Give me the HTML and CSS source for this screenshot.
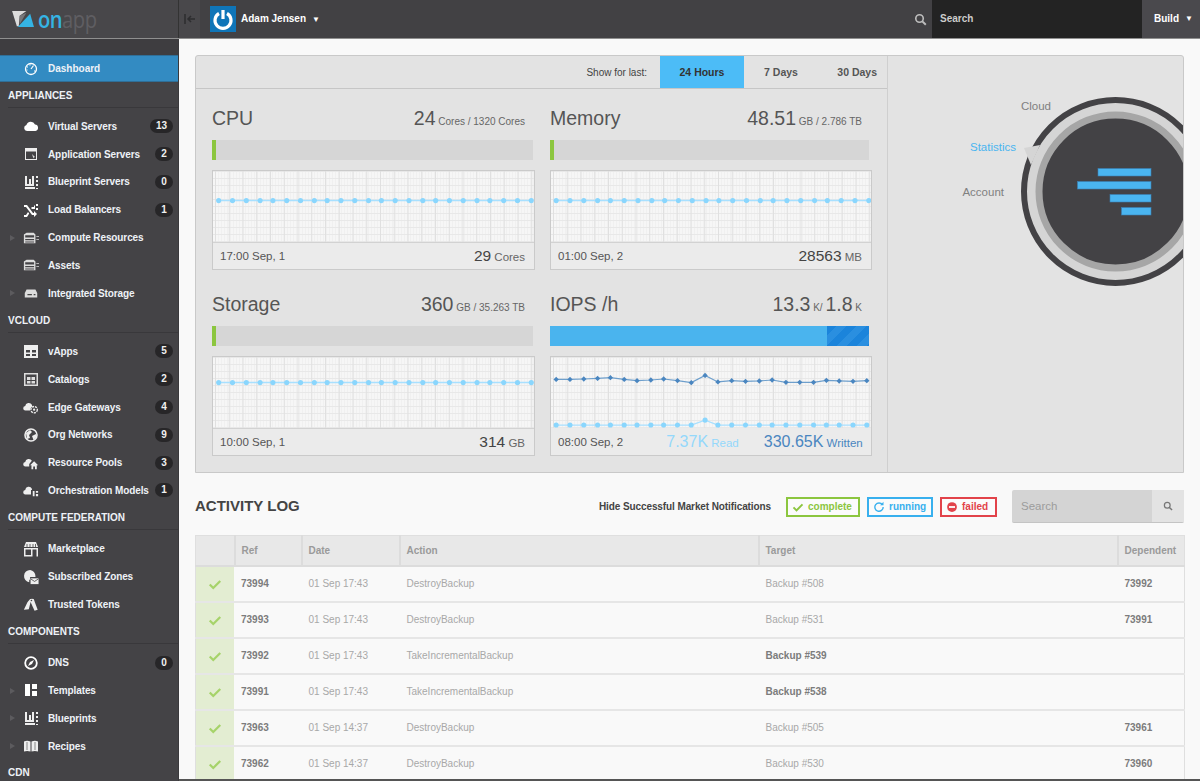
FILE: index.html
```html
<!DOCTYPE html>
<html lang="en">
<head>
<meta charset="utf-8">
<title>OnApp Dashboard</title>
<link rel="stylesheet" href="styles.css">
</head>
<body>
<svg class="defs" aria-hidden="true">
  <defs>
    <marker id="dl" viewBox="0 0 6 6" refX="3" refY="3" markerWidth="6" markerHeight="6" markerUnits="userSpaceOnUse"><circle cx="3" cy="3" r="2.6" fill="#8ad6fd"/></marker>
    <marker id="dd" viewBox="0 0 6 6" refX="3" refY="3" markerWidth="6" markerHeight="6" markerUnits="userSpaceOnUse"><path d="M3 .3 5.7 3 3 5.7 .3 3Z" fill="#4a86c0"/></marker>
    <symbol id="flat" viewBox="0 0 320 72">
      <polyline fill="none" stroke="#a8e0ff" stroke-width="1.5" marker-start="url(#dl)" marker-mid="url(#dl)" marker-end="url(#dl)" points="3,30 17,30 31,30 45,30 58,30 72,30 86,30 100,30 113,30 127,30 141,30 155,30 168,30 182,30 196,30 210,30 223,30 237,30 251,30 265,30 278,30 292,30 306,30 320,30"/>
    </symbol>
    <symbol id="i-cloud" viewBox="0 0 16 16"><path d="M4 13a3 3 0 0 1-.6-5.9A4.6 4.6 0 0 1 12 6.500a3.300 3.300 0 0 1 .5 6.500Z" fill="#fff"/></symbol>
    <symbol id="i-window" viewBox="0 0 16 16"><path d="M2 2h12v12H2z M3 5.500v7.500h10V5.500z" fill="#eee" fill-rule="evenodd"/><path d="M9 8l3 3-1.200.4-.4 1.200z" fill="#ddd"/></symbol>
    <symbol id="i-blue" viewBox="0 0 16 16"><path d="M2 2h2v8h2V5h2v5h1V2h2v10H2zM2 13h10v2H2zM13 2h2v2h-2zM13 6h2v2h-2zM13 10h2v2h-2zM13 14h2v1h-2z" fill="#eee"/></symbol>
    <symbol id="i-shuf" viewBox="0 0 16 16"><path d="M1 3h3l6 8h1V9l3 3-3 3v-2H9L3 5H1zM1 13h2l2-3 1.200 1.500L4 15H1zM8 6l1-1h2V3l0 0 1 1v3H9z" fill="#fff"/><path d="M13 2h2v2h-2zM13 6h2v2h-2z" fill="#fff"/></symbol>
    <symbol id="i-rack" viewBox="0 0 18 16"><path d="M4 2h8l2 2v10H1V4zM2.500 5v2.500h10V5zM2.500 9v1.500h10V9zM2.500 12v1h10v-1z" fill="#ddd" fill-rule="evenodd"/><path d="M15 6h3v1h-3zM15 9h3v1h-3z" fill="#ddd"/></symbol>
    <symbol id="i-disk" viewBox="0 0 18 16"><path d="M4 4h10l2 4v5H2V8z" fill="#ddd"/><path d="M5 9h5v1.500H5zM12 9h2v1.500h-2z" fill="#444"/></symbol>
    <symbol id="i-grid" viewBox="0 0 16 16"><path d="M1 2h14v13H1zM3 7v2.500h4V7zM9 7v2.500h4V7zM3 11v2h4v-2zM9 11v2h4v-2z" fill="#eee" fill-rule="evenodd"/></symbol>
    <symbol id="i-cat" viewBox="0 0 16 16"><path d="M1 2h14v13H1zM2.500 3.500v10h11v-10zM4 6h3.500v3H4zM8.500 6H12v3H8.500zM4 10h3.500v2.500H4zM8.500 10H12v2.500H8.500z" fill="#ddd" fill-rule="evenodd"/></symbol>
    <symbol id="i-globe" viewBox="0 0 16 16"><circle cx="8" cy="8" r="6" fill="none" stroke="#eee" stroke-width="1.600"/><path d="M3 6l4-3 2 2-3 3 1 3-3 1zM9 9l4-2 .5 3-3 3z" fill="#eee"/></symbol>
    <symbol id="i-edge" viewBox="0 0 18 16"><path d="M3 12a2.500 2.500 0 0 1-.5-5A4 4 0 0 1 10 5.500 3 3 0 0 1 10 8a4 4 0 0 0-2 4Z" fill="#eee"/><circle cx="12.500" cy="11" r="3.600" fill="none" stroke="#eee" stroke-width="1.500" stroke-dasharray="2.500 1"/><circle cx="12.500" cy="11" r="1.300" fill="#eee"/></symbol>
    <symbol id="i-pool" viewBox="0 0 18 16"><path d="M3 12a2.500 2.500 0 0 1-.5-5A4 4 0 0 1 10 5.500L7 9v3Z" fill="#eee"/><path d="M12.500 6 17 10.500h-1.500V15h-2v-3h-2v3h-2v-4.500H8z" fill="#eee"/></symbol>
    <symbol id="i-orch" viewBox="0 0 18 16"><path d="M3 13a2.500 2.500 0 0 1-.5-5A4 4 0 0 1 10 6.500 3 3 0 0 1 10 8H9v5Z" fill="#eee"/><path d="M11 9h2v6h-2zM14.500 9h2.500v2h-2.500zM14.500 12.500h2.500V15h-2.500z" fill="#eee"/></symbol>
    <symbol id="i-shop" viewBox="0 0 16 16"><path d="M3 1h10l2 5H1z" fill="#eee"/><path d="M1 7h14v8.500H1zM2.500 8.500v5.500h5.500v-5.500zM9.500 8.500v7H13.500v-7z" fill="#eee" fill-rule="evenodd"/><path d="M4 3v3M7 3v3M10 3v3M12.500 3v3" stroke="#444" stroke-width=".8"/></symbol>
    <symbol id="i-sub" viewBox="0 0 18 18"><path d="M8 1a7 7 0 0 0-1 13.900V12h1V9h6V8a7 7 0 0 0-6-7Z" fill="#eee"/><path d="M8.500 10.500h9v6.500h-9z" fill="#eee"/><path d="M8.500 11l4.500 3 4.500-3" fill="none" stroke="#444" stroke-width=".9"/></symbol>
    <symbol id="i-keys" viewBox="0 0 18 16"><path d="M1 14.500 5 6l3-3.500h2.500L8.500 6 6.500 14z" fill="#eee"/><path d="M9.500 2 12 2.500l4.500 12-3.500 1-5-11z" fill="#eee"/><circle cx="9.500" cy="4" r=".9" fill="#444"/></symbol>
    <symbol id="i-comp" viewBox="0 0 16 16"><circle cx="8" cy="8" r="5.800" fill="none" stroke="#fff" stroke-width="1.800"/><path d="M11 5 9 9 5 11l2-4z" fill="#fff"/></symbol>
    <symbol id="i-tmpl" viewBox="0 0 16 16"><path d="M2 2h5v12H2zM9 2h5v5H9zM9 9h5v5H9z" fill="#fff"/></symbol>
    <symbol id="i-book" viewBox="0 0 16 16"><path d="M1 3.500Q4 2 7.500 3.500v10Q4 12.500 1 13.500zM8.500 3.500Q12 2 15 3.500v10Q12 12.500 8.500 13.500z" fill="#eee"/><path d="M4 4v8M12 4v8" stroke="#444" stroke-width=".6"/></symbol>
    <symbol id="i-dash" viewBox="0 0 16 16"><circle cx="8" cy="8" r="5.500" fill="none" stroke="#fff" stroke-width="1.300"/><path d="M8 8 10.500 4.500M4 6h1M3.500 9h1M11 10h1.500M7 3.500v1" stroke="#fff" stroke-width="1.200"/></symbol>
    <symbol id="i-check" viewBox="0 0 16 16"><path d="M2 8.500 6 12.500 14 4.500" fill="none" stroke="currentColor" stroke-width="2.600"/></symbol>
    <symbol id="i-search" viewBox="0 0 16 16"><circle cx="6.800" cy="6.800" r="4.600" fill="none" stroke="currentColor" stroke-width="2"/><path d="M10.300 10.300 14.500 14.500" stroke="currentColor" stroke-width="2.400"/></symbol>
  </defs>
</svg>

<header class="topbar">
  <div class="logo">
    <svg class="logo-mark" viewBox="0 0 24 20"><path d="M0 1h15L8 6 7 17H5z" fill="#dcdcdc"/><path d="M8 6 15 3 8 15z" fill="#77777a"/><path d="M6 18 19 4l4 14z" fill="#35b4e4"/></svg>
    <span class="logo-text"><span class="logo-on">on</span><span class="logo-app">app</span></span>
  </div>
  <div class="collapse">
    <svg class="collapse-icon" viewBox="0 0 12 10"><path d="M1 0v10M11 5H4M7 2 4 5l3 3" fill="none" stroke="#2d2d2f" stroke-width="1.500"/></svg>
  </div>
  <div class="user">
    <div class="avatar"><svg class="avatar-icon" viewBox="0 0 26 26"><path d="M9 7.500a8 8 0 1 0 8 0" fill="none" stroke="#fff" stroke-width="3.200"/><path d="M13 4v9" stroke="#fff" stroke-width="3.200"/></svg></div>
    <span class="user-name">Adam Jensen</span><span class="caret">▼</span>
  </div>
  <div class="search-icon"><svg class="icon14" viewBox="0 0 16 16"><use href="#i-search"/></svg></div>
  <div class="top-search">Search</div>
  <div class="build">Build<span class="caret">▼</span></div>
</header>

<div class="layout">
  <nav class="sidebar">
    <a class="active-row"><svg class="ni"><use href="#i-dash"/></svg><span>Dashboard</span></a>

    <h3 class="nav-head">APPLIANCES</h3>
    <a class="row"><svg class="ni"><use href="#i-cloud"/></svg><span>Virtual Servers</span><b class="count">13</b></a>
    <a class="row"><svg class="ni"><use href="#i-window"/></svg><span>Application Servers</span><b class="count">2</b></a>
    <a class="row"><svg class="ni"><use href="#i-blue"/></svg><span>Blueprint Servers</span><b class="count">0</b></a>
    <a class="row"><svg class="ni"><use href="#i-shuf"/></svg><span>Load Balancers</span><b class="count">1</b></a>
    <a class="row tree"><svg class="ni"><use href="#i-rack"/></svg><span>Compute Resources</span></a>
    <a class="row"><svg class="ni"><use href="#i-rack"/></svg><span>Assets</span></a>
    <a class="row tree"><svg class="ni"><use href="#i-disk"/></svg><span>Integrated Storage</span></a>

    <h3 class="nav-head">VCLOUD</h3>
    <a class="row"><svg class="ni"><use href="#i-grid"/></svg><span>vApps</span><b class="count">5</b></a>
    <a class="row"><svg class="ni"><use href="#i-cat"/></svg><span>Catalogs</span><b class="count">2</b></a>
    <a class="row"><svg class="ni"><use href="#i-edge"/></svg><span>Edge Gateways</span><b class="count">4</b></a>
    <a class="row"><svg class="ni"><use href="#i-globe"/></svg><span>Org Networks</span><b class="count">9</b></a>
    <a class="row"><svg class="ni"><use href="#i-pool"/></svg><span>Resource Pools</span><b class="count">3</b></a>
    <a class="row"><svg class="ni"><use href="#i-orch"/></svg><span>Orchestration Models</span><b class="count">1</b></a>

    <h3 class="nav-head">COMPUTE FEDERATION</h3>
    <a class="row"><svg class="ni"><use href="#i-shop"/></svg><span>Marketplace</span></a>
    <a class="row"><svg class="ni"><use href="#i-sub"/></svg><span>Subscribed Zones</span></a>
    <a class="row"><svg class="ni"><use href="#i-keys"/></svg><span>Trusted Tokens</span></a>

    <h3 class="nav-head">COMPONENTS</h3>
    <a class="row"><svg class="ni"><use href="#i-comp"/></svg><span>DNS</span><b class="count">0</b></a>
    <a class="row tree"><svg class="ni"><use href="#i-tmpl"/></svg><span>Templates</span></a>
    <a class="row tree"><svg class="ni"><use href="#i-blue"/></svg><span>Blueprints</span></a>
    <a class="row tree"><svg class="ni"><use href="#i-book"/></svg><span>Recipes</span></a>

    <h3 class="nav-head">CDN</h3>
  </nav>

  <main class="main">
    <div class="content">
      <section class="panel">
        <div class="stats">
          <div class="periods">
            <span class="show-for">Show for last:</span>
            <a class="period period-on">24 Hours</a>
            <a class="period">7 Days</a>
            <a class="period period-last">30 Days</a>
          </div>
          <div class="stat-grid">
            <article class="stat">
              <div class="stat-head"><h2>CPU</h2><p><em>24</em> Cores / 1320 Cores</p></div>
              <div class="bar"><i class="bar-used"></i></div>
              <div class="chart">
                <div class="plot"><svg class="plot-svg"><use href="#flat"/></svg></div>
                <div class="chart-foot"><span>17:00 Sep, 1</span><span class="foot-val"><em>29</em> Cores</span></div>
              </div>
            </article>
            <article class="stat">
              <div class="stat-head"><h2>Memory</h2><p><em>48.51</em> GB / 2.786 TB</p></div>
              <div class="bar"><i class="bar-used"></i></div>
              <div class="chart">
                <div class="plot"><svg class="plot-svg"><use href="#flat"/></svg></div>
                <div class="chart-foot"><span>01:00 Sep, 2</span><span class="foot-val"><em>28563</em> MB</span></div>
              </div>
            </article>
            <article class="stat">
              <div class="stat-head"><h2>Storage</h2><p><em>360</em> GB / 35.263 TB</p></div>
              <div class="bar"><i class="bar-used"></i></div>
              <div class="chart">
                <div class="plot"><svg class="plot-svg"><use href="#flat" y="-4"/></svg></div>
                <div class="chart-foot"><span>10:00 Sep, 1</span><span class="foot-val"><em>314</em> GB</span></div>
              </div>
            </article>
            <article class="stat">
              <div class="stat-head"><h2>IOPS /h</h2><p><em>13.3</em> K/ <em>1.8</em> K</p></div>
              <div class="bar bar-iops"><i class="bar-write"></i></div>
              <div class="chart">
                <div class="plot">
                  <svg class="plot-svg" viewBox="0 0 320 72">
                    <polyline fill="none" stroke="#6e9fcc" stroke-width="1.200" marker-start="url(#dd)" marker-mid="url(#dd)" marker-end="url(#dd)" points="3,22.700 17,22.700 31,22.300 45,21.700 58,21 72,22.700 85,24 99,23.300 112,22.300 126,24 140,26 154,18.700 167,25.300 181,24 195,24.700 209,24.300 222,23.300 236,25.700 250,25.700 264,25.700 277,23.700 290,24.300 304,24.700 318,24"/>
                    <polyline fill="none" stroke="#a8e0ff" stroke-width="1.200" marker-start="url(#dl)" marker-mid="url(#dl)" marker-end="url(#dl)" points="3,69 17,69 31,69 45,69 58,69 72,69 85,69 99,69 112,69 126,69 140,69 154,64 167,69 181,69 195,69 209,69 222,69 236,69 250,69 264,69 277,69 290,69 304,69 318,69"/>
                  </svg>
                </div>
                <div class="chart-foot foot-iops"><span>08:00 Sep, 2</span><span class="read"><em>7.37K</em> Read</span><span class="written"><em>330.65K</em> Written</span></div>
              </div>
            </article>
          </div>
        </div>
        <aside class="dial">
          <svg class="dial-svg" viewBox="0 0 296 416">
            <text class="dial-t" x="163" y="54" text-anchor="end">Cloud</text>
            <text class="dial-t dial-on" x="128" y="95" text-anchor="end">Statistics</text>
            <text class="dial-t" x="116" y="140" text-anchor="end">Account</text>
            <circle cx="227.500" cy="135.500" r="91.500" fill="#d5d5d5" stroke="#434245" stroke-width="6"/>
            <circle cx="227.500" cy="135.500" r="76.500" fill="#434245" stroke="#a6a6a6" stroke-width="7"/>
            <path d="M136 92 152 89 143 109Z" fill="#d5d5d5"/>
            <g fill="#4ab5f0" stroke="#3a7fb5" stroke-width=".6">
              <rect x="210" y="112.500" width="53" height="7.500"/>
              <rect x="189.500" y="125.500" width="73.500" height="7.500"/>
              <rect x="222" y="138.500" width="41" height="7.500"/>
              <rect x="233.500" y="151.500" width="29.500" height="7.500"/>
            </g>
          </svg>
        </aside>
      </section>

      <section class="log-head">
        <h2 class="log-title">ACTIVITY LOG</h2>
        <div class="log-tools">
          <span class="hide-note">Hide Successful Market Notifications</span>
          <a class="chip chip-ok"><svg class="chip-i" viewBox="0 0 16 16"><use href="#i-check"/></svg>complete</a>
          <a class="chip chip-run"><svg class="chip-i" viewBox="0 0 16 16"><path d="M12.500 5A5.500 5.500 0 1 0 13.500 8" fill="none" stroke="currentColor" stroke-width="1.800"/><path d="M9.500 5.500h4.500V1z" fill="currentColor"/></svg>running</a>
          <a class="chip chip-fail"><svg class="chip-i" viewBox="0 0 16 16"><circle cx="8" cy="8" r="6.500" fill="currentColor"/><path d="M4 8h8" stroke="#fff" stroke-width="2.400"/></svg>failed</a>
          <div class="log-search"><span class="log-input">Search</span><span class="log-btn"><svg class="icon11" viewBox="0 0 16 16"><use href="#i-search"/></svg></span></div>
        </div>
      </section>

      <table class="log">
        <colgroup><col class="c1"><col class="c2"><col class="c3"><col class="c4"><col class="c5"><col class="c6"></colgroup>
        <thead><tr><th></th><th>Ref</th><th>Date</th><th>Action</th><th>Target</th><th>Dependent</th></tr></thead>
        <tbody>
          <tr><td class="st"><svg class="tick" viewBox="0 0 16 16"><use href="#i-check"/></svg></td><td class="b">73994</td><td>01 Sep 17:43</td><td>DestroyBackup</td><td>Backup #508</td><td class="b">73992</td></tr>
          <tr><td class="st"><svg class="tick" viewBox="0 0 16 16"><use href="#i-check"/></svg></td><td class="b">73993</td><td>01 Sep 17:43</td><td>DestroyBackup</td><td>Backup #531</td><td class="b">73991</td></tr>
          <tr><td class="st"><svg class="tick" viewBox="0 0 16 16"><use href="#i-check"/></svg></td><td class="b">73992</td><td>01 Sep 17:43</td><td>TakeIncrementalBackup</td><td class="b">Backup #539</td><td></td></tr>
          <tr><td class="st"><svg class="tick" viewBox="0 0 16 16"><use href="#i-check"/></svg></td><td class="b">73991</td><td>01 Sep 17:43</td><td>TakeIncrementalBackup</td><td class="b">Backup #538</td><td></td></tr>
          <tr><td class="st"><svg class="tick" viewBox="0 0 16 16"><use href="#i-check"/></svg></td><td class="b">73963</td><td>01 Sep 14:37</td><td>DestroyBackup</td><td>Backup #505</td><td class="b">73961</td></tr>
          <tr><td class="st"><svg class="tick" viewBox="0 0 16 16"><use href="#i-check"/></svg></td><td class="b">73962</td><td>01 Sep 14:37</td><td>DestroyBackup</td><td>Backup #530</td><td class="b">73960</td></tr>
        </tbody>
      </table>
    </div>
    <div class="edge-strip"></div>
  </main>
</div>
</body>
</html>
```

FILE: styles.css
```css
* { box-sizing: border-box; }
html, body { height: 100%; }
body {
  margin: 0;
  display: flex;
  flex-direction: column;
  overflow: hidden;
  font-family: "Liberation Sans", Arial, sans-serif;
  font-size: 10px;
  background: #f9f9f9;
  color: #555;
}
.defs { display: block; width: 0; height: 0; }
h2, h3, p { margin: 0; font-weight: normal; }
em { font-style: normal; }

/* top bar */
.topbar {
  flex: 0 0 39px;
  display: flex;
  background: #424144;
  border-bottom: 1px solid #8f8f8f;
  color: #fff;
  font-weight: bold;
}
.logo {
  width: 178px;
  display: flex;
  align-items: center;
  padding-left: 12px;
  gap: 3px;
  background: #48474a;
}
.logo-mark { width: 23px; height: 19px; flex: none; }
.logo-text {
  display: inline-block;
  transform: scaleX(.84);
  transform-origin: left center;
  font-family: "Open Sans", sans-serif;
  font-size: 24px;
  line-height: 28px;
  font-weight: 600;
  letter-spacing: -.6px;
}
.logo-on { color: #35b4e4; }
.logo-app { color: #5f5e62; font-weight: 400; }
.collapse {
  width: 22px;
  display: flex;
  align-items: center;
  justify-content: center;
  background: #49484b;
  border-left: 1px solid #333;
}
.collapse-icon { width: 12px; height: 10px; }
.user {
  flex: 1;
  display: flex;
  align-items: center;
  padding-left: 10px;
}
.avatar { width: 26px; height: 26px; background: #0f75b8; }
.avatar-icon { display: block; width: 26px; height: 26px; }
.user-name { margin: 0 0 1px 5px; }
.caret { margin-left: 6px; font-size: 8px; font-weight: normal; }
.search-icon {
  width: 24px;
  display: flex;
  align-items: center;
  justify-content: center;
  color: #bdbdbd;
}
.icon14 { width: 13px; height: 13px; display: block; }
.icon11 { width: 10px; height: 10px; display: block; }
.top-search {
  width: 210px;
  display: flex;
  align-items: center;
  padding: 0 0 1px 8px;
  background: #232323;
  color: #ccc;
}
.build {
  width: 58px;
  display: flex;
  align-items: center;
  padding: 0 0 1px 12px;
  background: #4a494d;
}

/* layout */
.layout { flex: 1; min-height: 0; display: flex; }

/* sidebar */
.sidebar {
  width: 179px;
  flex: none;
  overflow: hidden;
  padding-top: 16px;
  background: #444346;
  border-right: 1px solid #3a393c;
  color: #eef2f7;
  font-weight: bold;
  box-shadow: inset 0 16px 0 #3e3d40;
}
.active-row {
  height: 27px;
  display: flex;
  align-items: center;
  padding-left: 23px;
  background: #338bc2;
  border-top: 1px solid #2f6f98;
  border-bottom: 1px solid #2f6f98;
}
.active-row span { margin-left: 9px; }
.nav-head {
  margin: 0 0 4.500px 8px;
  padding: 6.500px 0 0;
  height: 26px;
  line-height: 13px;
  font-size: 10px;
  font-weight: bold;
  color: #eef2f7;
  border-bottom: 1px solid #39383b;
}
.row {
  position: relative;
  height: 27.800px;
  display: flex;
  align-items: center;
  padding: 0 5px 0 23px;
}
.row span { margin-left: 9px; flex: 1; white-space: nowrap; letter-spacing: -.1px; }
.ni { width: 16px; height: 16px; flex: none; }
.count {
  min-width: 18px;
  height: 14px;
  padding: 0 6px;
  border-radius: 7px;
  background: #272628;
  color: #f0f0f0;
  text-align: center;
  line-height: 14px;
  flex: none;
}
.tree::before {
  content: "";
  position: absolute;
  left: 10px;
  top: 11px;
  border-left: 5px solid #5c5b5e;
  border-top: 3px solid transparent;
  border-bottom: 3px solid transparent;
}

/* main */
.main { flex: 1; min-width: 0; display: flex; flex-direction: column; }
.content { flex: 1; min-height: 0; overflow: hidden; padding: 16px 16px 0 16px; }
.edge-strip { flex: 0 0 2px; background: #555; }

.panel {
  display: flex;
  height: 418px;
  background: #e3e3e3;
  border: 1px solid #c9c9c9;
  border-radius: 3px 3px 0 0;
}
.stats { width: 692px; flex: none; border-right: 1px solid #cfcfcf; }
.periods {
  height: 33px;
  display: flex;
  align-items: center;
  justify-content: flex-end;
  border-bottom: 1px solid #c6c6c6;
}
.show-for { margin-right: 13px; color: #444; }
.period {
  height: 32px;
  width: 74px;
  display: flex;
  align-items: center;
  justify-content: center;
  font-weight: bold;
  font-size: 10.500px;
  color: #555;
}
.period-on { width: 84px; background: #4cbcf7; color: #333; }
.period-last { width: 69px; justify-content: flex-end; padding-right: 10px; }
.stat-grid {
  display: grid;
  grid-template-columns: 323px 322px;
  column-gap: 15px;
  row-gap: 22px;
  padding: 17px 0 0 16px;
}
.stat-head {
  height: 24px;
  display: flex;
  justify-content: space-between;
  align-items: baseline;
  padding-right: 10px;
  line-height: 24px;
  color: #666;
}
.stat-head h2 { font-size: 19.500px; color: #555; }
.stat-head em { font-size: 19.500px; color: #555; }
.bar {
  height: 20px;
  margin: 10px 2px 10px 0;
  background: #d6d6d6;
}
.stat:nth-child(even) .bar { margin-right: 3px; }
.bar-used { display: block; width: 4px; height: 20px; background: #8cc63f; }
.bar-iops {
  display: flex;
  justify-content: flex-end;
  background: #4ab4ee;
}
.bar-write {
  display: block;
  width: 42px;
  background: repeating-linear-gradient(135deg, #1b84db 0 7px, #2a8fe0 7px 14px);
}
.chart {
  height: 100px;
  display: flex;
  flex-direction: column;
  border: 1px solid #cacaca;
  background: #ebebeb;
}
.plot {
  flex: 0 0 71px;
  background-color: #f6f6f6;
  background-image:
    linear-gradient(90deg, #e0e0e0 1px, transparent 1px),
    linear-gradient(#e8e8e8 1px, transparent 1px),
    repeating-linear-gradient(90deg, transparent 0 2px, #f0f0f0 2px 3px);
  background-size: 13.750px 100%, 100% 7px, 100% 100%;
  background-position: 2px 0, 0 0, 0 0;
}
.plot-svg { display: block; width: 100%; height: 71px; overflow: visible; }
.chart-foot {
  flex: 1;
  display: flex;
  justify-content: space-between;
  align-items: center;
  padding: 0 9px 0 7px;
  border-top: 1px solid #d2d2d2;
  font-size: 11.500px;
  color: #555;
  white-space: nowrap;
}
.chart-foot span { flex: none; }
.foot-val { color: #666; }
.foot-val em { font-size: 15.500px; color: #444; }
.foot-iops { border-top: 0; justify-content: flex-start; }
.read { margin-left: 43px; color: #94d8fb; }
.read em { font-size: 16px; }
.written { margin-left: 25px; color: #4a86c0; }
.written em { font-size: 16px; }

.dial { flex: 1; overflow: hidden; }
.dial-svg { display: block; width: 296px; height: 416px; }
.dial-t { font-size: 11.500px; fill: #808080; }
.dial-on { fill: #4ab5f0; }

/* log */
.log-head {
  height: 62px;
  display: flex;
  justify-content: space-between;
  align-items: center;
  padding-top: 5px;
}
.log-title { margin-bottom: 2px; font-size: 15px; font-weight: bold; color: #444; }
.log-tools { display: flex; align-items: center; }
.hide-note { margin-right: 15px; font-weight: bold; color: #444; letter-spacing: -.1px; }
.chip {
  height: 20px;
  display: flex;
  align-items: center;
  padding: 0 4px;
  margin-right: 7px;
  border: 2px solid;
  background: #fbfbfb;
  font-weight: bold;
}
.chip-i { width: 12px; height: 12px; margin-right: 4px; flex: none; }
.chip-ok { width: 74px; color: #8cc63f; }
.chip-run { width: 66px; color: #38b0ee; }
.chip-fail { width: 57px; color: #e2434a; margin-right: 15px; }
.log-search {
  display: flex;
  width: 172px;
  height: 33px;
  background: #d4d4d4;
  border-bottom: 1px solid #c4c4c4;
  border-radius: 2px;
}
.log-input { flex: 1; display: flex; align-items: center; padding-left: 9px; font-size: 11.500px; color: #9c9c9c; }
.log-btn { width: 32px; display: flex; align-items: center; justify-content: center; background: #e3e3e3; color: #777; }

.log {
  width: 989px;
  table-layout: fixed;
  border-collapse: collapse;
  border: 1px solid #dfdfdf;
}
.c1 { width: 39px; }
.c2 { width: 67px; }
.c3 { width: 98px; }
.c4 { width: 359px; }
.c5 { width: 359px; }
.c6 { width: 67px; }
.log th {
  height: 30px;
  padding: 0 0 0 6px;
  text-align: left;
  font-size: 10px;
  font-weight: bold;
  color: #9a9a9a;
  background: #e8e8e8;
  border-right: 2px solid #dcdcdc;
  border-bottom: 2px solid #dcdcdc;
}
.log th:last-child { border-right: 0; }
.log td {
  height: 36px;
  padding: 0 0 0 7px;
  color: #a8a8a8;
  border-bottom: 2px solid #e6e6e6;
}
.log td:nth-child(2) { padding-left: 6px; }
.log td.b { font-weight: bold; color: #7c7c7c; }
.log td.st { padding: 0; background: #e3edd2; text-align: center; color: #a6d36a; border-right: 1px solid #f9f9f9; }
.tick { display: block; margin: 0 auto; width: 14px; height: 14px; }
```
